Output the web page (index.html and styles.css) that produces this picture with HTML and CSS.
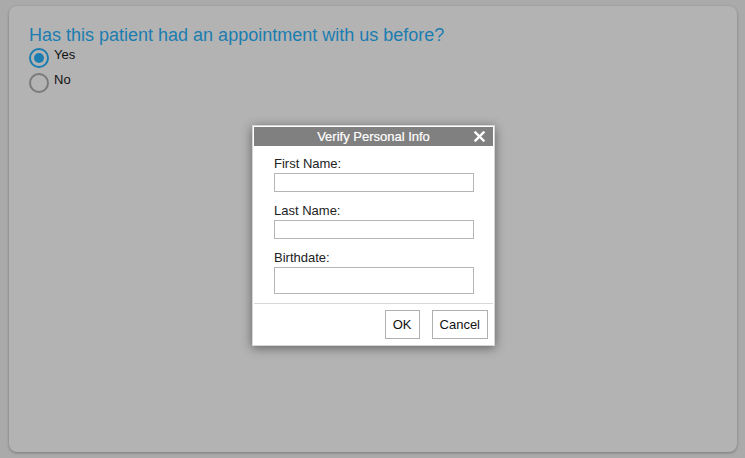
FILE: index.html
```html
<!DOCTYPE html>
<html>
<head>
<meta charset="utf-8">
<link rel="stylesheet" href="styles.css">
</head>
<body>
<div class="card">
  <h1 class="question">Has this patient had an appointment with us before?</h1>
  <div class="radios">
    <label class="radio"><span class="circle checked"><span class="dot"></span></span><span class="rtext">Yes</span></label>
    <label class="radio"><span class="circle"></span><span class="rtext">No</span></label>
  </div>
</div>
<div class="dialog">
  <div class="titlebar">
    <span class="title">Verify Personal Info</span>
    <svg class="close" width="11" height="11" viewBox="0 0 11 11"><path d="M1.5 1.5 L9.5 9.5 M9.5 1.5 L1.5 9.5" stroke="#fff" stroke-width="2.4" stroke-linecap="square"/></svg>
  </div>
  <div class="body">
    <div class="field"><div class="label">First Name:</div><div class="input"></div></div>
    <div class="field"><div class="label">Last Name:</div><div class="input"></div></div>
    <div class="field"><div class="label">Birthdate:</div><div class="input tall"></div></div>
  </div>
  <div class="footer">
    <button class="btn">OK</button>
    <button class="btn">Cancel</button>
  </div>
</div>
</body>
</html>
```
FILE: styles.css
```css
html, body { margin: 0; padding: 0; }
body {
  background: #aaaaaa;
  font-family: "Liberation Sans", Arial, sans-serif;
  width: 745px;
  height: 458px;
  overflow: hidden;
  padding: 6px 8px 6px 9px;
  box-sizing: border-box;
}
.card {
  height: 446px;
  box-sizing: border-box;
  background: #b3b3b3;
  border-radius: 8px;
  box-shadow: 0 1px 3px rgba(0,0,0,0.3);
  padding: 18px 20px;
}
.question {
  margin: 0;
  font-weight: normal;
  font-size: 18px;
  line-height: 22px;
  color: #1b7db0;
}
.radios { display: flex; flex-direction: column; gap: 4px; margin-top: 1px; }
.radio { display: flex; align-items: flex-start; gap: 5px; }
.circle {
  width: 20px; height: 20px; box-sizing: border-box;
  border: 2px solid #7a7a7a; border-radius: 50%;
  display: flex; align-items: center; justify-content: center;
  margin-top: 1px;
}
.circle.checked { border-color: #1b7db0; }
.dot { width: 10px; height: 10px; border-radius: 50%; background: #1b7db0; }
.rtext { font-size: 13px; line-height: 16px; color: #111; }
.dialog {
  position: absolute;
  left: 252px; top: 125px;
  width: 243px;
  box-sizing: border-box;
  background: #fff;
  border: 1px solid #d6d6d6;
  padding: 1px;
  box-shadow: 0 2px 10px rgba(0,0,0,0.45);
}
.titlebar {
  height: 19px;
  background: #808080;
  position: relative;
  display: flex; align-items: center; justify-content: center;
}
.title { color: #fff; font-size: 13px; font-weight: normal; font-family: "Liberation Sans", Arial, sans-serif; -webkit-text-stroke: 0.2px #fff; }
.close { position: absolute; right: 8px; top: 4px; }
.body { padding: 10px 19px 9px 20px; display: flex; flex-direction: column; gap: 11px; }
.label { font-size: 13px; line-height: 16px; color: #222; }
.input {
  margin-top: 1px;
  width: 200px; height: 19px; box-sizing: border-box;
  border: 1px solid #b5b5b5;
}
.input.tall { height: 27px; }
.footer {
  border-top: 1px solid #d8d8d8;
  display: flex; justify-content: flex-end; gap: 12px;
  padding: 6px 5px 5px;
}
.btn {
  background: #fff;
  border: 1px solid #b0b0b0;
  font-family: "Liberation Sans", Arial, sans-serif;
  font-size: 13px;
  color: #111;
  height: 29px;
  padding: 0 7px;
  border-radius: 0;
}
```
